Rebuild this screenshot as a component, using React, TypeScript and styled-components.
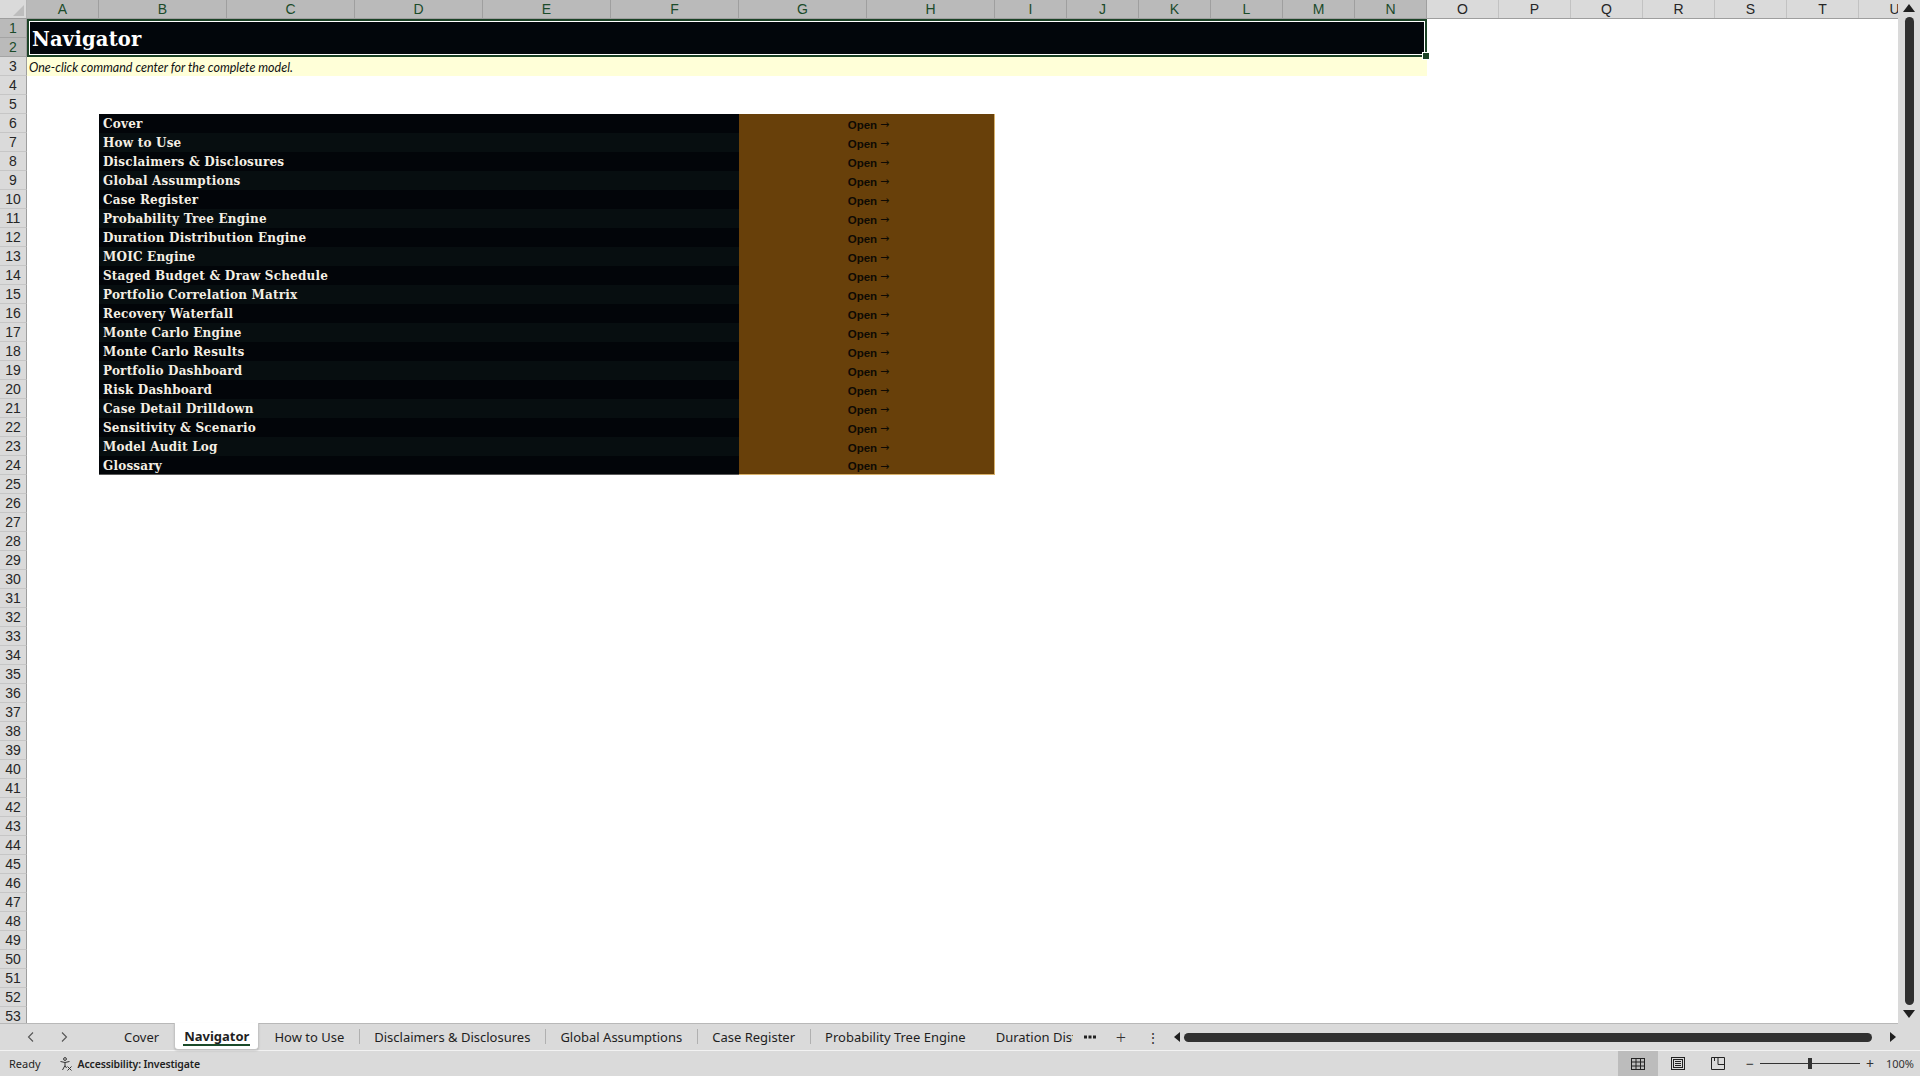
import { createGlobalStyle } from "styled-components";
import styled from "styled-components";

const GlobalStyle = createGlobalStyle`
  html, body {
    margin: 0;
    padding: 0;
    width: 1920px;
    height: 1076px;
    overflow: hidden;
    background: #ffffff;
    font-family: "Noto Sans", "Liberation Sans", sans-serif;
  }
  * { box-sizing: border-box; }
`;

const ROW_H = 19;
const ROWS = 53;

const columns: { name: string; width: number }[] = [
  { name: "A", width: 72 },
  { name: "B", width: 128 },
  { name: "C", width: 128 },
  { name: "D", width: 128 },
  { name: "E", width: 128 },
  { name: "F", width: 128 },
  { name: "G", width: 128 },
  { name: "H", width: 128 },
  { name: "I", width: 72 },
  { name: "J", width: 72 },
  { name: "K", width: 72 },
  { name: "L", width: 72 },
  { name: "M", width: 72 },
  { name: "N", width: 72 },
  { name: "O", width: 72 },
  { name: "P", width: 72 },
  { name: "Q", width: 72 },
  { name: "R", width: 72 },
  { name: "S", width: 72 },
  { name: "T", width: 72 },
  { name: "U", width: 72 },
];
const selectedCols = "ABCDEFGHIJKLMN";

const sheets = [
  "Cover",
  "How to Use",
  "Disclaimers & Disclosures",
  "Global Assumptions",
  "Case Register",
  "Probability Tree Engine",
  "Duration Distribution Engine",
  "MOIC Engine",
  "Staged Budget & Draw Schedule",
  "Portfolio Correlation Matrix",
  "Recovery Waterfall",
  "Monte Carlo Engine",
  "Monte Carlo Results",
  "Portfolio Dashboard",
  "Risk Dashboard",
  "Case Detail Drilldown",
  "Sensitivity & Scenario",
  "Model Audit Log",
  "Glossary",
];

const tabs = [
  "Cover",
  "Navigator",
  "How to Use",
  "Disclaimers & Disclosures",
  "Global Assumptions",
  "Case Register",
  "Probability Tree Engine",
];

const Window = styled.div`
  width: 1920px;
  height: 1076px;
  display: flex;
  flex-direction: column;
  background: #d9d9d9;
`;

const Workspace = styled.div`
  flex: 1;
  display: flex;
  min-height: 0;
`;

const SheetArea = styled.div`
  flex: 1;
  display: flex;
  flex-direction: column;
  overflow: hidden;
  background: #ffffff;
  border-bottom: 1px solid #b8b8b8;
`;

const HeaderRow = styled.div`
  display: flex;
  height: 19px;
  flex: none;
  background: #dadada;
  border-bottom: 1px solid #9e9e9e;
`;

const Corner = styled.div`
  width: 27px;
  flex: none;
  position: relative;
  background: #dadada;
  border-right: 1px solid #b4b4b4;
  &::after {
    content: "";
    position: absolute;
    right: 2px;
    bottom: 2px;
    border-style: solid;
    border-width: 0 0 11px 11px;
    border-color: transparent transparent #bdbdbd transparent;
  }
`;

const ColHead = styled.div<{ $w: number; $sel: boolean }>`
  width: ${(p) => p.$w}px;
  flex: none;
  display: flex;
  align-items: center;
  justify-content: center;
  font-family: "Liberation Sans", Arial, sans-serif;
  font-size: 14px;
  color: ${(p) => (p.$sel ? "#1b4b2a" : "#262626")};
  background: ${(p) => (p.$sel ? "#bababa" : "#dadada")};
  border-right: 1px solid ${(p) => (p.$sel ? "#9f9f9f" : "#c2c2c2")};
  line-height: 18px;
`;

const Grid = styled.div`
  display: grid;
  grid-template-columns: 27px 72px 640px 256px 432px 1fr;
  grid-template-rows: repeat(${ROWS}, ${ROW_H}px);
`;

const RowHead = styled.div<{ $row: number; $sel: boolean }>`
  grid-column: 1;
  grid-row: ${(p) => p.$row};
  display: flex;
  align-items: center;
  justify-content: center;
  font-family: "Liberation Sans", Arial, sans-serif;
  font-size: 14px;
  line-height: 17px;
  padding-top: 1px;
  color: ${(p) => (p.$sel ? "#1b4b2a" : "#262626")};
  background: ${(p) => (p.$sel ? "#bababa" : "#dadada")};
  border-right: 1px solid #9e9e9e;
  border-bottom: 1px solid ${(p) => (p.$sel ? "#a4a4a4" : "#c6c6c6")};
`;

const TitleCell = styled.div`
  grid-column: 2 / 6;
  grid-row: 1 / 3;
  position: relative;
  background: #02060b;
  border: 2px solid #1b4226;
  box-shadow: inset 0 0 0 1px #ffffff;
  display: flex;
  align-items: center;
  padding: 2px 0 0 3px;
  font-family: "DejaVu Serif", "Liberation Serif", serif;
  font-weight: 700;
  font-size: 19.5px;
  letter-spacing: 0.2px;
  color: #ffffff;
  &::after {
    content: "";
    position: absolute;
    right: -5px;
    bottom: -5px;
    width: 6px;
    height: 6px;
    background: #1b4226;
    border: 1px solid #ffffff;
  }
`;

const Subtitle = styled.div`
  grid-column: 2 / 6;
  grid-row: 3;
  background: #ffffd8;
  display: flex;
  align-items: center;
  padding: 1px 0 0 2px;
  font-family: Lato, "Open Sans", sans-serif;
  font-style: italic;
  font-size: 12.5px;
  color: #111111;
`;

const NavLabel = styled.div<{ $row: number; $alt: boolean; $last: boolean }>`
  grid-column: 3;
  grid-row: ${(p) => p.$row};
  background: ${(p) => (p.$alt ? "#070e10" : "#020509")};
  display: flex;
  align-items: center;
  padding: 1px 0 0 4px;
  font-family: "DejaVu Serif", "Liberation Serif", serif;
  font-weight: 700;
  font-size: 12px;
  letter-spacing: 0.2px;
  color: #f4efe4;
  border-bottom: ${(p) => (p.$last ? "1px solid #5a5a5a" : "none")};
`;

const OpenCell = styled.div<{ $row: number; $last: boolean }>`
  grid-column: 4;
  grid-row: ${(p) => p.$row};
  background: #68400a;
  display: flex;
  align-items: center;
  justify-content: center;
  gap: 3px;
  padding: 2px 0 0 4px;
  font-family: "Liberation Sans", Arial, sans-serif;
  font-weight: 700;
  font-size: 11.5px;
  color: #0e0a04;
  border-right: 1px solid #d7b06a;
  border-bottom: ${(p) => (p.$last ? "1px solid #d7b06a" : "none")};
`;

const ArrowGlyph = styled.span`
  font-family: "DejaVu Sans", sans-serif;
  font-weight: 400;
  font-size: 11px;
`;

const VScroll = styled.div`
  width: 22px;
  flex: none;
  display: flex;
  flex-direction: column;
  align-items: center;
  padding: 4px 0 6px;
  gap: 5px;
  background: #dadada;
`;

const Thumb = styled.div<{ $dir: "v" | "h" }>`
  flex: 1;
  background: #303030;
  border-radius: 5px;
  ${(p) => (p.$dir === "v" ? "width: 9px;" : "height: 9px; margin-right: 14px;")}
`;

const Arrow = styled.div<{ $dir: "up" | "down" | "left" | "right" }>`
  width: 0;
  height: 0;
  flex: none;
  border-style: solid;
  ${(p) =>
    p.$dir === "up"
      ? "border-width: 0 6px 8px 6px; border-color: transparent transparent #1f1f1f transparent;"
      : p.$dir === "down"
      ? "border-width: 8px 6px 0 6px; border-color: #1f1f1f transparent transparent transparent;"
      : p.$dir === "left"
      ? "border-width: 5px 6px 5px 0; border-color: transparent #1f1f1f transparent transparent;"
      : "border-width: 5px 0 5px 6px; border-color: transparent transparent transparent #1f1f1f;"}
`;

const TabBar = styled.div`
  height: 27px;
  flex: none;
  display: flex;
  align-items: stretch;
  background: #dadada;
  border-bottom: 1px solid #f2f2f2;
  font-size: 13px;
  color: #1f1f1f;
`;

const NavButtons = styled.div`
  width: 109px;
  flex: none;
  display: flex;
  align-items: center;
  padding-left: 27px;
  gap: 25px;
`;

const Tab = styled.div<{ $active: boolean; $sep: boolean }>`
  position: relative;
  display: flex;
  align-items: center;
  padding: 0 ${(p) => (p.$active ? 9 : 14)}px;
  margin-top: ${(p) => (p.$active ? "-1px" : "0")};
  white-space: nowrap;
  font-weight: ${(p) => (p.$active ? 700 : 400)};
  background: ${(p) => (p.$active ? "#ffffff" : "transparent")};
  border: ${(p) => (p.$active ? "1px solid #c4c4c4" : "1px solid transparent")};
  border-top: none;
  border-radius: 0 0 4px 4px;
  box-shadow: ${(p) => (p.$active ? "0 1px 2px rgba(0,0,0,0.15)" : "none")};
  &::before {
    content: "";
    display: ${(p) => (p.$sep ? "block" : "none")};
    position: absolute;
    left: -1px;
    top: 5px;
    bottom: 5px;
    width: 1px;
    background: #b0b0b0;
  }
  &::after {
    content: "";
    display: ${(p) => (p.$active ? "block" : "none")};
    position: absolute;
    left: 8px;
    right: 8px;
    bottom: 3px;
    height: 2px;
    background: #1b4b2a;
  }
`;

const ClippedTab = styled(Tab)`
  width: 93px;
  overflow: hidden;
  padding-right: 0;
`;

const TabTools = styled.div`
  display: flex;
  align-items: center;
  gap: 20px;
  padding: 0 10px 0 10px;
  color: #333333;
`;

const HScroll = styled.div`
  flex: 1;
  display: flex;
  align-items: center;
  gap: 4px;
  padding: 0 24px 0 4px;
`;

const StatusBar = styled.div`
  height: 25px;
  flex: none;
  display: flex;
  align-items: center;
  background: #dadada;
  font-size: 11px;
  color: #1f1f1f;
`;

const StatusText = styled.span<{ $bold?: boolean }>`
  font-weight: ${(p) => (p.$bold ? 600 : 400)};
  font-size: ${(p) => (p.$bold ? "10.5px" : "11px")};
  letter-spacing: ${(p) => (p.$bold ? "-0.15px" : "0")};
  display: flex;
  align-items: center;
  gap: 5px;
`;

const StatusLeft = styled.div`
  display: flex;
  align-items: center;
  gap: 18px;
  padding-left: 9px;
  flex: 1;
`;

const ViewButton = styled.div<{ $active?: boolean }>`
  width: 40px;
  height: 25px;
  display: flex;
  align-items: center;
  justify-content: center;
  background: ${(p) => (p.$active ? "#bcbcbc" : "transparent")};
`;

const Zoom = styled.div`
  display: flex;
  align-items: center;
  gap: 6px;
  padding: 0 6px 0 8px;
  color: #333333;
  font-size: 14px;
`;

const Slider = styled.div`
  position: relative;
  width: 100px;
  height: 1px;
  background: #333333;
  &::after {
    content: "";
    position: absolute;
    left: 48px;
    top: -5px;
    width: 4px;
    height: 11px;
    background: #333333;
  }
`;

const ZoomLabel = styled.span`
  font-size: 11px;
  margin-left: 6px;
`;

const Chevron = ({ right }: { right?: boolean }) => (
  <svg width="8" height="12" viewBox="0 0 8 12" fill="none" stroke="#555" strokeWidth="1.1">
    <path d={right ? "M2 1.5 L6.5 6 L2 10.5" : "M6 1.5 L1.5 6 L6 10.5"} />
  </svg>
);

const Dots = () => (
  <svg width="12" height="4" viewBox="0 0 12 4" fill="#222">
    <rect x="0" y="0.5" width="3" height="3" />
    <rect x="4.5" y="0.5" width="3" height="3" />
    <rect x="9" y="0.5" width="3" height="3" />
  </svg>
);

const AccessIcon = () => (
  <svg width="14" height="14" viewBox="0 0 14 14" fill="none" stroke="#333" strokeWidth="1">
    <circle cx="6" cy="2" r="1.4" />
    <path d="M1.5 4.5 L6 5.5 L10.5 4.5 M6 5.5 V8.5 L3.5 13 M6 8.5 L7.5 11" />
    <path d="M8.5 9.5 L12.5 13.5 M12.5 9.5 L8.5 13.5" />
  </svg>
);

const NormalIcon = () => (
  <svg width="14" height="12" viewBox="0 0 14 12" fill="none" stroke="#222" strokeWidth="1">
    <rect x="0.5" y="0.5" width="13" height="11" />
    <path d="M5 0.5 V11.5 M9.5 0.5 V11.5 M0.5 4 H13.5 M0.5 8 H13.5" />
  </svg>
);

const LayoutIcon = () => (
  <svg width="14" height="13" viewBox="0 0 14 13" fill="none" stroke="#222" strokeWidth="1">
    <rect x="0.5" y="0.5" width="13" height="12" />
    <rect x="2.5" y="2.5" width="9" height="8" />
    <path d="M4 4.5 H10 M4 6.5 H10 M4 8.5 H10" />
  </svg>
);

const BreakIcon = () => (
  <svg width="14" height="13" viewBox="0 0 14 13" fill="none" stroke="#222" strokeWidth="1">
    <path d="M0.5 0.5 H13.5 V12.5 H0.5 Z M7 0.5 V7.5 H13.5 M3.5 0.5 V4" />
  </svg>
);

export default function App() {
  return (
    <>
      <GlobalStyle />
      <Window>
        <Workspace>
          <SheetArea>
            <HeaderRow>
              <Corner />
              {columns.map((c) => (
                <ColHead key={c.name} $w={c.width} $sel={selectedCols.includes(c.name)}>
                  {c.name}
                </ColHead>
              ))}
            </HeaderRow>
            <Grid>
              {Array.from({ length: ROWS }, (_, i) => (
                <RowHead key={i} $row={i + 1} $sel={i < 2}>
                  {i + 1}
                </RowHead>
              ))}
              <TitleCell>Navigator</TitleCell>
              <Subtitle>One-click command center for the complete model.</Subtitle>
              {sheets.map((name, i) => (
                <NavLabel key={name} $row={i + 6} $alt={i % 2 === 1} $last={i === sheets.length - 1}>
                  {name}
                </NavLabel>
              ))}
              {sheets.map((name, i) => (
                <OpenCell key={"o" + name} $row={i + 6} $last={i === sheets.length - 1}>
                  Open<ArrowGlyph>→</ArrowGlyph>
                </OpenCell>
              ))}
            </Grid>
          </SheetArea>
          <VScroll>
            <Arrow $dir="up" />
            <Thumb $dir="v" />
            <Arrow $dir="down" />
          </VScroll>
        </Workspace>

        <TabBar>
          <NavButtons>
            <Chevron />
            <Chevron right />
          </NavButtons>
          {tabs.map((t, i) => (
            <Tab
              key={t}
              $active={t === "Navigator"}
              $sep={i > 0 && t !== "Navigator" && tabs[i - 1] !== "Navigator"}
            >
              {t}
            </Tab>
          ))}
          <ClippedTab $active={false} $sep={true}>
            Duration Distribution Engine
          </ClippedTab>
          <TabTools>
            <Dots />
            <span style={{ fontSize: 18, fontWeight: 300 }}>+</span>
            <span style={{ fontSize: 14 }}>⋮</span>
          </TabTools>
          <HScroll>
            <Arrow $dir="left" />
            <Thumb $dir="h" />
            <Arrow $dir="right" />
          </HScroll>
        </TabBar>

        <StatusBar>
          <StatusLeft>
            <StatusText>Ready</StatusText>
            <StatusText $bold>
              <AccessIcon />
              Accessibility: Investigate
            </StatusText>
          </StatusLeft>
          <ViewButton $active>
            <NormalIcon />
          </ViewButton>
          <ViewButton>
            <LayoutIcon />
          </ViewButton>
          <ViewButton>
            <BreakIcon />
          </ViewButton>
          <Zoom>
            <span>−</span>
            <Slider />
            <span>+</span>
            <ZoomLabel>100%</ZoomLabel>
          </Zoom>
        </StatusBar>
      </Window>
    </>
  );
}
